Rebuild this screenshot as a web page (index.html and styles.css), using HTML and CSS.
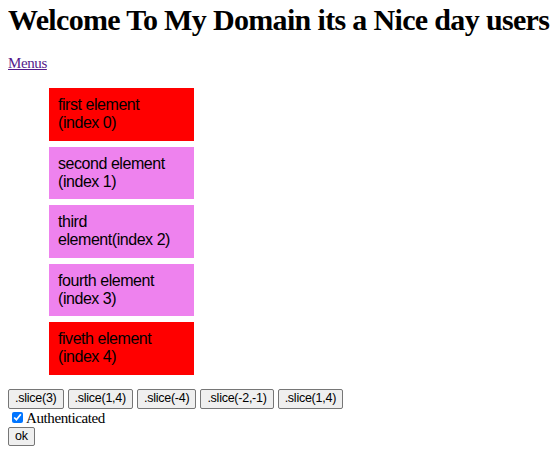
FILE: index.html
```html
<!DOCTYPE html>
<html>
<head>
<meta charset="utf-8">
<title>Domain</title>
<link rel="stylesheet" href="styles.css">
</head>
<body>
<h1 class="title">Welcome To My Domain its a Nice day users</h1>
<p class="nav"><a class="menu-link" href="#menus">Menus</a></p>
<ul class="items">
  <li class="item red">first element (index 0)</li>
  <li class="item violet">second element (index 1)</li>
  <li class="item violet">third element(index 2)</li>
  <li class="item violet">fourth element (index 3)</li>
  <li class="item red">fiveth element (index 4)</li>
</ul>
<div class="controls">
  <button class="btn">.slice(3)</button>
  <button class="btn">.slice(1,4)</button>
  <button class="btn">.slice(-4)</button>
  <button class="btn">.slice(-2,-1)</button>
  <button class="btn">.slice(1,4)</button>
</div>
<div class="auth"><input type="checkbox" class="check" checked><span class="auth-label">Authenticated</span></div>
<div class="ok-row"><button class="btn">ok</button></div>
</body>
</html>
```

FILE: styles.css
```css
body {
  margin: 1px 8px 8px;
  font-family: "Liberation Serif", "Times New Roman", serif;
  font-size: 16px;
  color: #000;
  background: #fff;
}

.title {
  margin: 0;
  font-size: 30px;
  line-height: 37px;
  letter-spacing: -0.66px;
  font-weight: bold;
  white-space: nowrap;
}

.nav {
  margin: 16px 0 16px;
  font-size: 15px;
  line-height: 18px;
  letter-spacing: -0.4px;
}

.menu-link {
  color: #551a8b;
}

.items {
  list-style: none;
  margin: 16px 0 0;
  padding: 0 0 0 41px;
}

.item {
  width: 126px;
  padding: 8px 10px 8px 9px;
  margin-bottom: 5.7px;
  font-family: "Liberation Sans", Arial, sans-serif;
  font-size: 16px;
  line-height: 18.4px;
  letter-spacing: -0.45px;
  color: #000;
}

.item:last-child {
  margin-bottom: 0;
}

.red {
  background: #ff0000;
}

.violet {
  background: #ee82ee;
}

.controls {
  display: flex;
  gap: 4px;
  margin-top: 14.5px;
}

.btn {
  font-family: "Liberation Sans", Arial, sans-serif;
  font-size: 12.5px;
  line-height: 15.3px;
  letter-spacing: -0.25px;
  color: #000;
  background: #efefef;
  border: 1px solid #767676;
  border-radius: 2px;
  padding: 1px 6px;
  margin: 0;
}

.auth {
  display: flex;
  align-items: center;
  height: 18px;
}

.check {
  width: 11px;
  height: 11px;
  margin: 0 3px 0 4px;
  accent-color: #0075ff;
}

.auth-label {
  font-size: 15px;
  letter-spacing: -0.4px;
  line-height: 18px;
}

.ok-row {
  display: flex;
}
```
